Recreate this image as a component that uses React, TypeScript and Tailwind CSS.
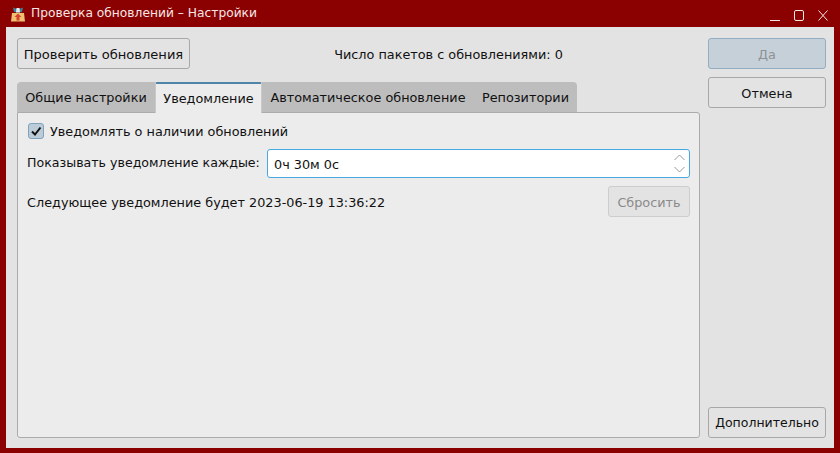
const btn = "h-[31px] pt-[2px] rounded-[3px] border border-[#a8a8a8] bg-[#e3e3e3] text-[#111] flex items-center justify-center";

const tabs = [
  { label: "Общие настройки", w: "w-[138px]" },
  { label: "Уведомление", w: "w-[107px]" },
  { label: "Автоматическое обновление", w: "w-[212px]" },
  { label: "Репозитории", w: "w-[103px]" },
];

export default function App() {
  return (
    <div className="w-[840px] h-[453px] bg-[#8b0000] flex flex-col overflow-hidden font-['DejaVu_Sans',sans-serif]">
      <div className="h-[27px] shrink-0 flex items-center pl-[10px] pr-[12px] text-[#f4e6e6] text-[12.25px]">
        <svg width="16" height="16" viewBox="0 0 16 16" className="mr-[5px] mt-[1px]">
          <path d="M2 7 H14 L15 15.5 H1 Z" fill="#efc070" />
          <path d="M8 7.5 L11.5 11 H9.5 V14.5 H6.5 V11 H4.5 Z" fill="#d9412f" />
          <path d="M3 1.5 L7 3 L8 6.5 L4 6 Z" fill="#3d8296" />
          <path d="M13 1.5 L9 3 L8 6.5 L12 6 Z" fill="#3d8296" />
          <path d="M6.5 2 H9.5 L10 6.5 H6 Z" fill="#e6eef0" />
        </svg>
        <span>Проверка обновлений – Настройки</span>
        <div className="ml-auto mt-[3px] flex items-center gap-[14px]">
          <svg width="10" height="11" viewBox="0 0 10 11" stroke="#f4e6e6" fill="none"><path d="M0 10.5H10" /></svg>
          <svg width="10" height="11" viewBox="0 0 10 11" stroke="#f4e6e6" fill="none"><rect x="0.5" y="0.5" width="9" height="10" rx="1.5" /></svg>
          <svg width="10" height="11" viewBox="0 0 10 11" stroke="#f4e6e6" fill="none"><path d="M0.5 0.5L9.5 10.5M9.5 0.5L0.5 10.5" /></svg>
        </div>
      </div>
      <div className="mx-[6px] mb-[5px] flex-1 bg-[#e3e3e3] flex gap-[8px] pl-[11px] pr-[8px] pt-[11px] pb-[10px]">
        <div className="w-[683px] flex flex-col">
          <div className="flex items-center h-[31px] mb-[13px]">
            <button className={btn + " w-[173px] text-[13.05px]"}>Проверить обновления</button>
            <div className="flex-1 text-center text-[12.82px] text-[#111] pl-[7px] pt-[2px]">Число пакетов с обновлениями: 0</div>
          </div>
          <div className="flex h-[30px] text-[12.82px] text-[#111] bg-transparent">
            {tabs.map((t, i) =>
              i === 1 ? (
                <div key={t.label} className={t.w + " h-[31px] relative z-10 flex items-center justify-center bg-[#ececec] border-t-[2px] border-[#4f83a8] border-x border-x-[#c9c9c9] rounded-t-[2px]"}>{t.label}</div>
              ) : (
                <div key={t.label} className={t.w + " bg-[#bdbdbd] pt-[2px] flex items-center justify-center whitespace-nowrap " + (i === 0 ? "rounded-tl-[4px]" : i === 3 ? "rounded-tr-[4px]" : "")}>{t.label}</div>
              )
            )}
          </div>
          <div className="flex-1 bg-[#ececec] border border-[#ababab] rounded-b-[3px] rounded-tr-[3px] px-[9px] text-[12.82px] text-[#111]">
            <div className="flex items-center h-[16px] mt-[10px] ml-[1px] gap-[6px]">
              <span className="w-[16px] h-[16px] rounded-[3px] border border-[#7fa3bd] bg-[#bccbd8] flex items-center justify-center">
                <svg width="12" height="12" viewBox="0 0 12 12" fill="none" stroke="#111" strokeWidth="2"><path d="M2 6.5L5 9.5L10.5 2.5" /></svg>
              </span>
              <span className="pt-[2px]">Уведомлять о наличии обновлений</span>
            </div>
            <div className="flex items-center mt-[10px] h-[29px]">
              <span className="w-[240px] shrink-0 whitespace-nowrap text-[12.6px]">Показывать уведомление каждые:</span>
              <div className="flex-1 h-[29px] bg-white border border-[#48a8e0] rounded-[3px] flex items-center pl-[6px] pr-[3px]">
                <span className="pt-[2px]">0ч 30м 0с</span>
                <svg className="ml-auto" width="12" height="24" viewBox="0 0 12 24" fill="none" stroke="#9a9a9a"><path d="M0.5 8L5.5 3L10.5 8M0.5 15L5.5 20L10.5 15" /></svg>
              </div>
            </div>
            <div className="flex items-center mt-[8px] h-[31px]">
              <span className="pt-[2px]">Следующее уведомление будет 2023-06-19 13:36:22</span>
              <div className="ml-auto w-[82px] h-[31px] pt-[2px] rounded-[3px] border border-[#cdcdcd] bg-[#e3e3e3] text-[#8a8a8a] flex items-center justify-center">Сбросить</div>
            </div>
          </div>
        </div>
        <div className="flex-1 flex flex-col">
          <button className="h-[31px] pt-[2px] rounded-[3px] border border-[#93aec4] bg-[#c6d0d9] text-[12.82px] text-[#8e9296] flex items-center justify-center">Да</button>
          <button className={btn + " mt-[8px] text-[12.82px]"}>Отмена</button>
          <button className={btn + " mt-auto text-[12.5px]"}>Дополнительно</button>
        </div>
      </div>
    </div>
  );
}
